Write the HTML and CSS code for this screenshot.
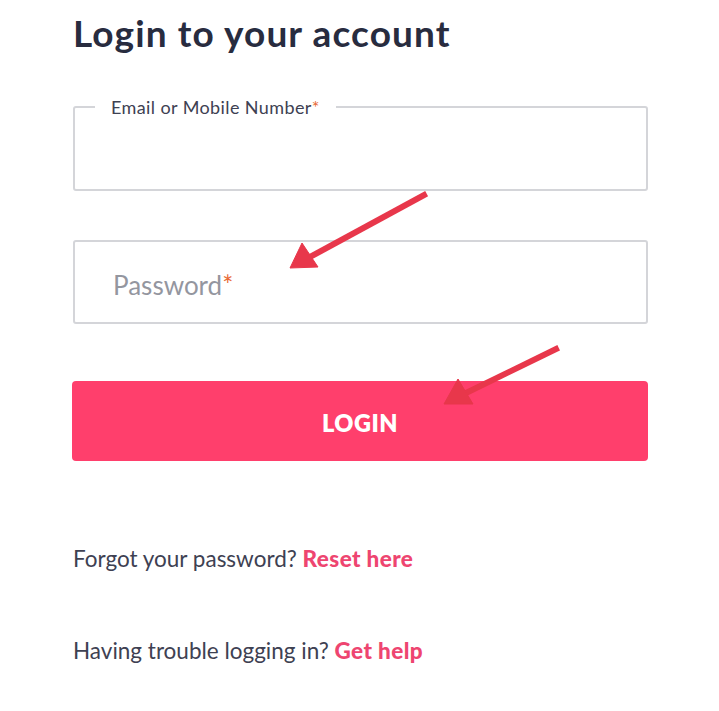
FILE: index.html
```html
<!DOCTYPE html>
<html lang="en">
<head>
<meta charset="utf-8">
<title>Login</title>
<link rel="stylesheet" href="styles.css">
</head>
<body>
<main class="page">
  <h1 class="title">Login to your account</h1>
  <form class="form">
    <fieldset class="field field-email">
      <legend class="field-legend">Email or Mobile Number<span class="req">*</span></legend>
    </fieldset>
    <div class="field field-password">
      <span class="placeholder">Password<span class="req">*</span></span>
    </div>
    <button type="button" class="login-btn">LOGIN</button>
  </form>
  <p class="help-line">Forgot your password? <a class="help-link">Reset here</a></p>
  <p class="help-line">Having trouble logging in? <a class="help-link">Get help</a></p>
  <svg class="arrows" width="719" height="711" viewBox="0 0 719 711" aria-hidden="true">
    <g fill="#e8374b" stroke="#e8374b">
      <line x1="424" y1="195" x2="310" y2="257" stroke-width="6" stroke-linecap="square"/>
      <polygon points="290,268 302,243 318,267" stroke-width="1" stroke-linejoin="round"/>
      <line x1="556" y1="349" x2="462" y2="395" stroke-width="6" stroke-linecap="square"/>
      <polygon points="444,404 458,379 473,404" stroke-width="1" stroke-linejoin="round"/>
    </g>
  </svg>
</main>
</body>
</html>
```
FILE: styles.css
```css
html, body {
  margin: 0;
  padding: 0;
  background: #ffffff;
}

.page {
  position: relative;
  width: 719px;
  height: 711px;
  box-sizing: border-box;
  padding: 9px 72px 0 73px;
  font-family: "Lato", "Noto Sans", sans-serif;
  color: #282c3f;
  overflow: hidden;
}

.title {
  margin: 0;
  font-size: 37px;
  line-height: 48px;
  font-weight: 700;
  color: #282c3f;
  letter-spacing: 1.1px;
}

.form {
  display: flex;
  flex-direction: column;
  margin-top: 40px;
}

.field {
  box-sizing: border-box;
  width: 575px;
  border: 2.5px solid #d4d5d9;
  border-radius: 3px;
  margin: 0;
}

.field-email {
  height: 94px;
  padding: 0;
}

.field-legend {
  margin-left: 20px;
  padding: 0 16px 0 16px;
  font-size: 18px;
  line-height: 20px;
  color: #3e4152;
  letter-spacing: 0.4px;
}

.req {
  color: #e86a36;
}

.field-password {
  height: 84px;
  margin-top: 49px;
  display: flex;
  align-items: center;
  padding-left: 38px;
}

.placeholder {
  font-size: 26px;
  color: #94969f;
  padding-top: 6px;
}

.login-btn {
  margin-top: 57px;
  width: 576px;
  margin-left: -1px;
  height: 80px;
  border: none;
  border-radius: 4px;
  background: #ff3f6c;
  color: #ffffff;
  font-family: "Lato", "Noto Sans", sans-serif;
  font-size: 23.5px;
  font-weight: 800;
  letter-spacing: 0.5px;
  padding: 4px 0 0;
}

.help-line {
  margin: 0;
  font-size: 22.5px;
  line-height: 30px;
  color: #3e4152;
}

.help-line:first-of-type {
  margin-top: 83px;
}

.help-line + .help-line {
  margin-top: 62px;
}

.help-link {
  color: #ee4570;
  font-weight: 900;
  text-decoration: none;
  letter-spacing: 0.4px;
}

.arrows {
  position: absolute;
  left: 0;
  top: 0;
  pointer-events: none;
}
```
